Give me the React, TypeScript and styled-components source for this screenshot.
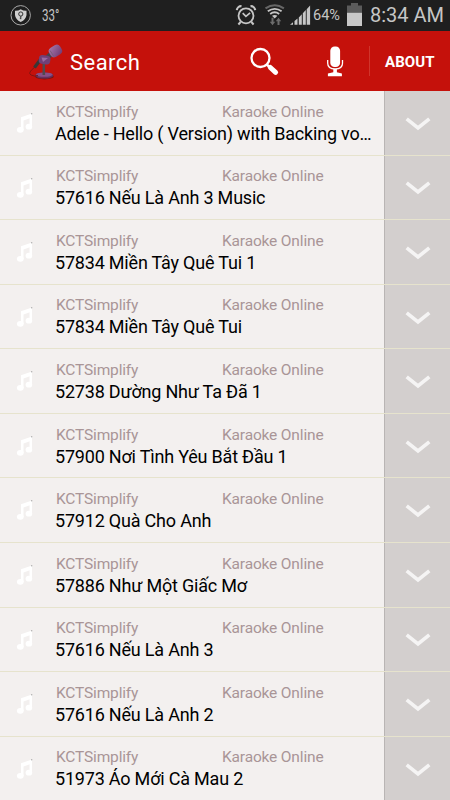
import React from "react";
import styled, { createGlobalStyle } from "styled-components";

const GlobalStyle = createGlobalStyle`
  * { box-sizing: border-box; }
  body { margin: 0; background: #f3f0ef; font-family: Roboto, "Noto Sans", sans-serif; }
`;

const Screen = styled.div`
  width: 450px;
  height: 800px;
  overflow: hidden;
  display: flex;
  flex-direction: column;
  background: #f3f0ef;
`;

const StatusBar = styled.div`
  height: 31px;
  flex: none;
  display: flex;
  align-items: center;
  background: #1f1f1f;
  color: #c6c6c6;
  svg { display: block; flex: none; }
`;

const StatusText = styled.span<{ $size: number; $left: number; $width: number; $squeeze?: number }>`
  font-size: ${(p) => p.$size}px;
  margin-left: ${(p) => p.$left}px;
  width: ${(p) => p.$width}px;
  line-height: 31px;
  white-space: nowrap;
  transform: scaleX(${(p) => p.$squeeze ?? 1});
  transform-origin: left;
`;

const StatusGroup = styled.div`
  margin-left: auto;
  width: 218px;
  height: 31px;
  display: flex;
  align-items: center;
`;

const AppBar = styled.header`
  height: 60px;
  flex: none;
  display: flex;
  align-items: center;
  background: #c5110b;
  color: #fff;
  svg { display: block; flex: none; }
`;

const Title = styled.h1`
  margin: 0 0 0 3px;
  padding-top: 3px;
  width: 179px;
  font-size: 22px;
  font-weight: 400;
  line-height: 57px;
  letter-spacing: 0.45px;
`;

const Actions = styled.div`
  display: flex;
  align-items: center;
  gap: 45px;
`;

const Divider = styled.div`
  width: 1px;
  height: 30px;
  margin-left: 25px;
  background: #d0352c;
`;

const About = styled.div`
  margin-left: 15px;
  font-size: 15px;
  font-weight: 700;
  letter-spacing: 0.1px;
  line-height: 58px;
  padding-top: 2px;
`;

const List = styled.main`
  flex: none;
`;

const Row = styled.div`
  height: 64.58px;
  display: flex;
  border-bottom: 1px solid #e6e3cd;
`;

const NoteCell = styled.div`
  width: 55px;
  padding: 18px 0 0 15px;
  svg { display: block; }
`;

const Body = styled.div`
  width: 329px;
  padding-top: 10.7px;
`;

const Meta = styled.div`
  display: grid;
  grid-template-columns: 166px 1fr;
  padding-left: 1px;
  font-size: 15.5px;
  letter-spacing: -0.16px;
  line-height: 20px;
  color: #a99597;
`;

const SongTitle = styled.div`
  width: 317px;
  font-size: 18px;
  letter-spacing: -0.2px;
  line-height: 24px;
  color: #000;
  white-space: nowrap;
`;

const Expand = styled.div`
  flex: 1;
  display: flex;
  align-items: center;
  justify-content: center;
  border-left: 1px solid #b9b5b4;
  background: #d3cfce;
  padding-top: 2px;
`;

const songs = [
  "Adele - Hello ( Version) with Backing vo…",
  "57616 Nếu Là Anh 3 Music",
  "57834 Miền Tây Quê Tui 1",
  "57834 Miền Tây Quê Tui",
  "52738 Dường Như Ta Đã 1",
  "57900 Nơi Tình Yêu Bắt Đầu 1",
  "57912 Quà Cho Anh",
  "57886 Như Một Giấc Mơ",
  "57616 Nếu Là Anh 3",
  "57616 Nếu Là Anh 2",
  "51973 Áo Mới Cà Mau 2",
];

const ShieldIcon = () => (
  <svg width="32" height="31" viewBox="0 0 32 31">
    <circle cx="20.7" cy="15.3" r="9.7" fill="none" stroke="#a8a8a8" strokeWidth="1" />
    <path d="M15 10.7 Q18.5 10.8 20.7 9.2 Q23 10.8 26.5 10.7 V15 Q26 19.7 20.7 22 Q15.500 19.7 15 15Z" fill="#d0d0d0" />
    <circle cx="20.8" cy="14" r="2.1" fill="none" stroke="#333" strokeWidth="1" />
    <path d="M20.8 16v3.2M19.8 18.2h1" stroke="#333" strokeWidth="1" />
  </svg>
);

const AlarmIcon = () => (
  <svg width="29" height="31" viewBox="232 0 29 31">
    <g fill="none" stroke="#c6c6c6">
      <circle cx="246" cy="15.8" r="7.5" strokeWidth="1.8" />
      <path d="M236.8 10.2a4.4 4.4 0 0 1 4.7-4M255.2 10.2a4.4 4.4 0 0 0-4.7-4" strokeWidth="2.2" />
      <path d="M240.6 22l-2.2 2.5M251.4 22l2.2 2.5" strokeWidth="2" />
      <path d="M242.7 13.2l3.2 3.2 4.2-3.5" strokeWidth="1.7" />
    </g>
  </svg>
);

const WifiIcon = () => (
  <svg width="27" height="31" viewBox="261 0 27 31">
    <g fill="none">
      <path d="M265.5 8.3q9.2-6.2 18.4 0" stroke="#666" strokeWidth="2" />
      <path d="M267.8 11.3q7-4.9 13.8 0" stroke="#c6c6c6" strokeWidth="1.9" />
      <path d="M270.2 13.9q4.5-3.3 9 0" stroke="#c6c6c6" strokeWidth="1.8" />
    </g>
    <path d="M272 15.7q2.7-1.6 5.4 0l-2.7 2.7z" fill="#c6c6c6" />
    <path d="M271.5 17.7h2v4h1.7l-2.7 3.6-2.7-3.6h1.7zM279.5 25h-2v-3.800h-1.700l2.700-3.500 2.700 3.500h-1.700z" fill="#6c6c6c" />
  </svg>
);

const SignalIcon = () => (
  <svg width="24" height="31" viewBox="288 0 24 31">
    <path d="M290 24.8l3-2.5v2.5zM294.5 24.8v-3.8l3-2.5v6.3zM298.8 24.8v-7.3l3-3.2v10.5z" fill="#c6c6c6" />
    <path d="M302.8 24.8V13.3l3-3.2v14.7zM306.7 24.8V9.2l3.4-3.7v19.3z" fill="#c6c6c6" />
  </svg>
);

const BatteryIcon = () => (
  <svg width="18" height="31" viewBox="346 0 18 31">
    <path d="M351 3h7v2.500h4V13h-15V5.500h4z" fill="#5b5b5b" />
    <path d="M347 12.8h15V26h-15z" fill="#c8c8c8" />
  </svg>
);

const DeskMicIcon = () => (
  <svg width="67" height="60" viewBox="0 31 67 60">
    <defs>
      <linearGradient id="head" x1="0" y1="0" x2="0.7" y2="1">
        <stop offset="0" stopColor="#a77bae" />
        <stop offset="1" stopColor="#754078" />
      </linearGradient>
    </defs>
    <ellipse cx="44.5" cy="76.7" rx="9.3" ry="2.7" fill="#7d120d" />
    <ellipse cx="44.3" cy="75.5" rx="9" ry="3.1" fill="#65315f" />
    <ellipse cx="44.3" cy="74.6" rx="8.3" ry="2.2" fill="#895087" />
    <path d="M35 67q-8 6-4 8 4 2 7 .5" fill="none" stroke="#7a1412" strokeWidth="0.9" />
    <path d="M43.8 62v13" stroke="#504b50" strokeWidth="2.6" />
    <path d="M34.5 67.5l6-8" stroke="#383736" strokeWidth="3.3" />
    <path d="M45 60l7-7" stroke="#45434a" strokeWidth="5" />
    <rect x="38.8" y="55.3" width="11.5" height="8.7" rx="3.3" transform="rotate(8 44 60)" fill="#704078" />
    <path d="M41.500 57.500l6.500.5-5 4z" fill="#986aa3" />
    <rect x="49" y="46" width="12.700" height="10.500" rx="4" transform="rotate(-32 55 51)" fill="url(#head)" />
    <path d="M50 50.500l4 6" stroke="#766079" strokeWidth="1" />
  </svg>
);

const SearchIcon = () => (
  <svg width="32" height="60" viewBox="249 31 32 60">
    <circle cx="260.5" cy="58" r="9" fill="none" stroke="#fff" strokeWidth="2.3" />
    <path d="M266.7 64.5l3.5 3.2" stroke="#fff" strokeWidth="2.5" />
    <path d="M270.3 67.5l5.3 4.8" stroke="#fff" strokeWidth="5" strokeLinecap="round" />
  </svg>
);

const MicIcon = () => (
  <svg width="18" height="60" viewBox="326 31 18 60">
    <rect x="330.300" y="46.5" width="9.8" height="20.5" rx="4.3" fill="#fff" />
    <path d="M327.7 60v3.3q0 5.7 7.400 5.700t7.400-5.700V60" fill="none" stroke="#fff" strokeWidth="1.3" />
    <path d="M333.300 69h3.600v3.200l5 1.300v2.800h-14v-2.800l5.400-1.300z" fill="#fff" />
  </svg>
);

const NoteIcon = () => (
  <svg width="20" height="27" viewBox="0 0 20 27">
    <path d="M6 8.2L17 4.5v4L8.5 11.5V21H6z" fill="#fff" />
    <path d="M14.5 6H17v12h-2.500z" fill="#fff" />
    <ellipse cx="5.3" cy="20.8" rx="3.4" ry="2.9" fill="#fff" />
    <ellipse cx="13.9" cy="17.7" rx="3.3" ry="2.9" fill="#fff" />
    <circle cx="16.7" cy="4.7" r="0.7" fill="#aaa" />
  </svg>
);

const ChevronIcon = () => (
  <svg width="26" height="16" viewBox="0 0 26 16">
    <path d="M1.700 2.800L13 12 24.300 2.800" fill="none" stroke="#f5f4f4" strokeWidth="3.600" />
  </svg>
);

export default function App() {
  return (
    <Screen>
      <GlobalStyle />
      <StatusBar>
        <ShieldIcon />
        <StatusText $size={17} $left={10} $width={20} $squeeze={0.68}>33°</StatusText>
        <StatusGroup>
          <AlarmIcon />
          <WifiIcon />
          <SignalIcon />
          <StatusText $size={14.5} $left={1} $width={33}>64%</StatusText>
          <BatteryIcon />
          <StatusText $size={20} $left={6} $width={80}>8:34 AM</StatusText>
        </StatusGroup>
      </StatusBar>
      <AppBar>
        <DeskMicIcon />
        <Title>Search</Title>
        <Actions>
          <SearchIcon />
          <MicIcon />
        </Actions>
        <Divider />
        <About>ABOUT</About>
      </AppBar>
      <List>
        {songs.map((song) => (
          <Row key={song}>
            <NoteCell><NoteIcon /></NoteCell>
            <Body>
              <Meta><span>KCTSimplify</span><span>Karaoke Online</span></Meta>
              <SongTitle>{song}</SongTitle>
            </Body>
            <Expand><ChevronIcon /></Expand>
          </Row>
        ))}
      </List>
    </Screen>
  );
}
